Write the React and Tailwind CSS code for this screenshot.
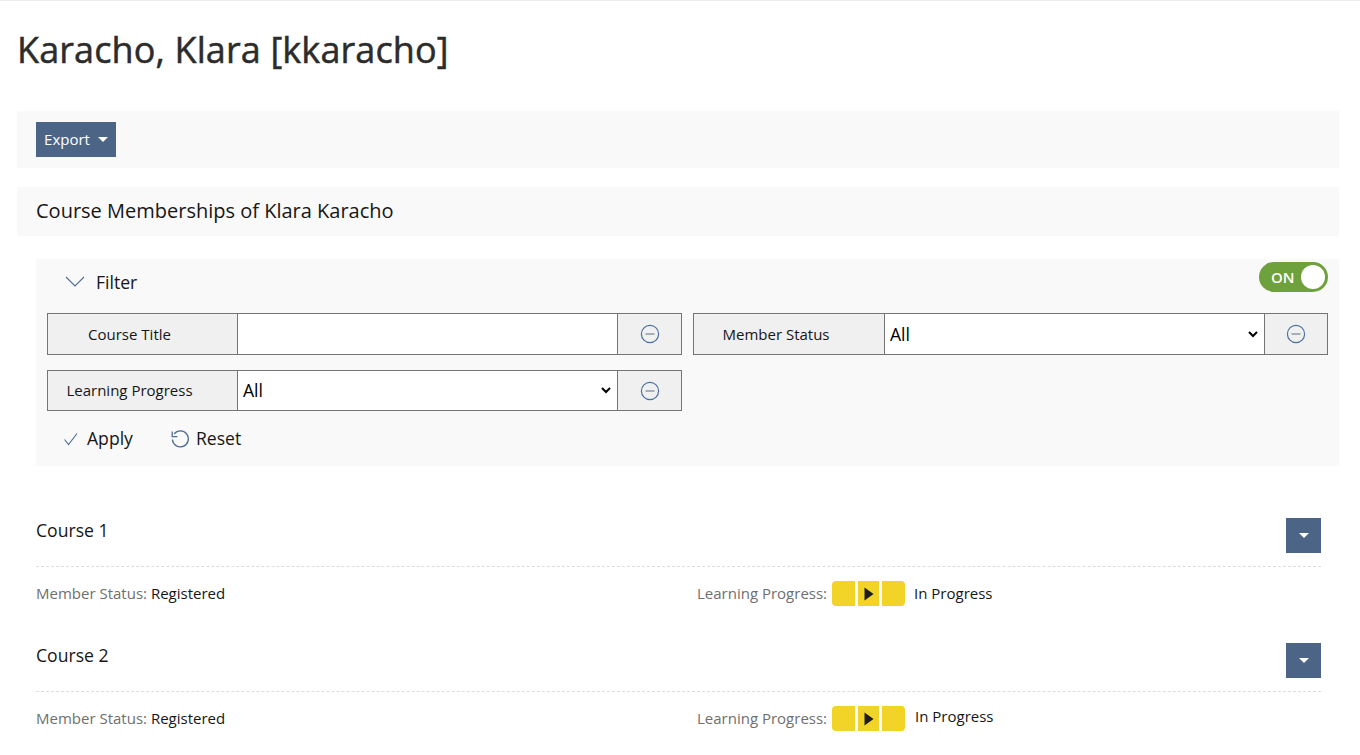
import React from "react";

const MinusIcon = () => (
  <svg width="20" height="20" viewBox="0 0 20 20" fill="none">
    <circle cx="10" cy="10" r="8.6" stroke="#4a72a6" strokeWidth="1.2" />
    <path d="M5.5 10h9" stroke="#8f99a8" strokeWidth="1.5" />
  </svg>
);

const FilterRow = ({ label, children, rowHeight = "h-[42px]", labelWidth = "w-[190px]", endWidth = "w-[64px]" }) => (
  <div className={`flex border border-[#757575] ${rowHeight}`}>
    <div className={`flex shrink-0 items-center justify-center border-r border-[#757575] bg-[#f0f0f0] pr-[26px] text-[15px] text-[#161616] ${labelWidth}`}>
      {label}
    </div>
    <div className="flex-1 min-w-0 bg-white">{children}</div>
    <div className={`flex shrink-0 items-center justify-center border-l border-[#757575] bg-[#f0f0f0] ${endWidth}`}>
      <MinusIcon />
    </div>
  </div>
);

const StatusSelect = () => (
  <select className="h-full w-[calc(100%-3px)] bg-white pb-[1px] pl-[1px] text-[17.6px] text-black outline-none">
    <option>All</option>
  </select>
);

const ProgressIcon = () => (
  <div className="mx-[5px] flex h-[25px] gap-[3px]">
    <div className="w-[23px] rounded-l-[4px] bg-[#f2d327]" />
    <div className="flex w-[21px] items-center justify-center bg-[#f2d327]">
      <svg width="10" height="14" viewBox="0 0 10 14">
        <path d="M0.5 0.5L9.5 7L0.5 13.5Z" fill="#1c1c1c" />
      </svg>
    </div>
    <div className="w-[23px] rounded-r-[4px] bg-[#f2d327]" />
  </div>
);

const CourseItem = ({ title, statusClass = "ml-[4px]" }) => (
  <div className="h-[125px]">
    <div className="flex h-[64px] justify-between border-b border-dashed border-[#dddddd] pt-[15px]">
      <div className="text-[17.6px] leading-[24px] text-[#161616]">{title}</div>
      <button className="flex h-[35px] w-[35px] items-center justify-center bg-[#4c6586]">
        <span className="h-0 w-0 border-x-[5px] border-t-[5px] border-x-transparent border-t-white" />
      </button>
    </div>
    <div className="flex items-center pt-[14px] text-[15px] leading-[25px]">
      <div className="w-[661px]">
        <span className="text-[#6f6f6f]">Member Status: </span>
        <span className="text-[#161616]">Registered</span>
      </div>
      <span className="text-[#6f6f6f]">Learning Progress:</span>
      <ProgressIcon />
      <span className={`text-[#161616] ${statusClass}`}>In Progress</span>
    </div>
  </div>
);

export default function App() {
  return (
    <div className="h-[755px] overflow-hidden border-t border-[#ececec] bg-white font-['Open_Sans',sans-serif]">
      <div className="h-[110px] pl-[17px] pt-[25px]">
        <h1 className="text-[36px] leading-[48px] font-normal tracking-[0.12px] text-[#2c2c2c] [-webkit-text-stroke:0.5px_#2c2c2c]">
          Karacho, Klara [kkaracho]
        </h1>
      </div>

      <div className="pl-[17px] pr-[21px]">
        <div className="flex h-[57px] items-center bg-[#f9f9f9] pl-[19px]">
          <button className="flex h-[35px] w-[80px] items-center justify-center gap-[8px] bg-[#4c6586] text-[15px] text-white">
            Export
            <span className="h-0 w-0 border-x-[5px] border-t-[5px] border-x-transparent border-t-white" />
          </button>
        </div>

        <div className="mt-[19px] flex h-[49px] items-center bg-[#f9f9f9] pb-[2px] pl-[19px] text-[20px] text-[#161616]">
          Course Memberships of Klara Karacho
        </div>

        <div className="ml-[19px] mt-[23px] h-[207px] bg-[#f9f9f9] px-[11px]">
          <div className="flex h-[54px] items-start justify-between">
            <div className="flex items-center pl-[18px] pt-[11px]">
              <svg width="20" height="24" viewBox="0 0 20 24" fill="none">
                <path d="M1 7l9 9 9-9" stroke="#4d6d96" strokeWidth="1.1" />
              </svg>
              <span className="ml-[11px] text-[17.6px] leading-[24px] text-[#161616]">Filter</span>
            </div>
            <div className="mt-[3px] flex h-[30px] w-[69px] items-center justify-between rounded-full bg-[#6ea03c] pl-[12px] pr-[3px]">
              <span className="text-[15px] font-semibold text-white">ON</span>
              <span className="h-[24px] w-[24px] rounded-full bg-white" />
            </div>
          </div>

          <div className="grid grid-cols-[635px_635px] gap-x-[11px] gap-y-[15px]">
            <FilterRow label="Course Title">
              <input className="h-full w-full bg-white px-[5px] text-[16px] outline-none" />
            </FilterRow>
            <FilterRow label="Member Status" labelWidth="w-[191px]" endWidth="w-[63px]">
              <StatusSelect />
            </FilterRow>
            <FilterRow label="Learning Progress" rowHeight="h-[41px]">
              <StatusSelect />
            </FilterRow>
          </div>

          <div className="flex items-center pl-[16px] pt-[15px] text-[17.6px] leading-[25px] text-[#161616]">
            <svg width="16" height="16" viewBox="0 0 16 16" fill="none">
              <path d="M1.5 8.5l4 5 8.5-11" stroke="#4d6d96" strokeWidth="1.1" />
            </svg>
            <span className="ml-[8px]">Apply</span>
            <svg className="ml-[37px]" width="20" height="20" viewBox="0 0 20 20" fill="none">
              <path d="M4.2 4.8A8 8 0 1 1 2.4 10.5" stroke="#4d6d96" strokeWidth="1.3" />
              <path d="M2.2 2.5v5.2h5.2" stroke="#4d6d96" strokeWidth="1.3" />
            </svg>
            <span className="ml-[6px]">Reset</span>
          </div>
        </div>

        <div className="ml-[19px] mr-[18px] mt-[37px]">
          <CourseItem title="Course 1" />
          <CourseItem title="Course 2" statusClass="ml-[5px] -translate-y-[2px]" />
        </div>
      </div>
    </div>
  );
}
